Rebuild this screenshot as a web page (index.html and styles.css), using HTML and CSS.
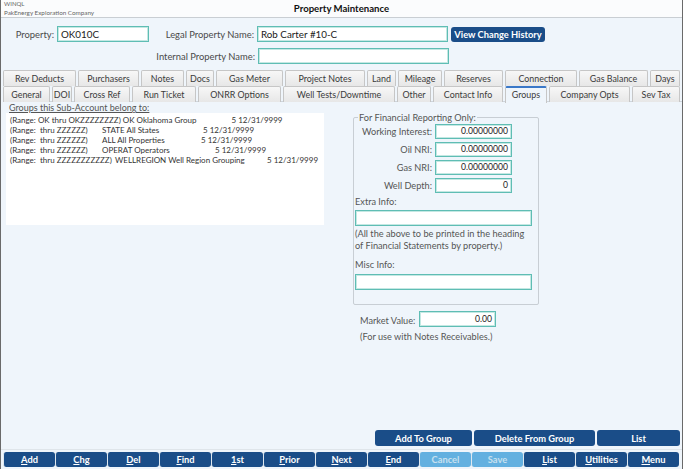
FILE: index.html
```html
<!DOCTYPE html>
<html>
<head>
<meta charset="utf-8">
<link rel="stylesheet" href="styles.css">
</head>
<body>
<div class="window">
  <div class="header">
    <div class="brand">
      <div class="app">WINQL</div>
      <div class="company">PakEnergy Exploration Company</div>
    </div>
    <div class="title">Property Maintenance</div>
  </div>

  <div class="form">
    <div class="row">
      <label class="lbl lbl-prop">Property:</label>
      <div class="input in-prop">OK010C</div>
      <label class="lbl lbl-legal">Legal Property Name:</label>
      <div class="input in-legal">Rob Carter #10-C</div>
      <button class="btn btn-history">View Change History</button>
    </div>
    <div class="row row2">
      <label class="lbl lbl-legal">Internal Property Name:</label>
      <div class="input in-legal"></div>
    </div>
  </div>

  <div class="tabs">
    <div class="tabrow back">
      <div class="tab">Rev Deducts</div>
      <div class="tab">Purchasers</div>
      <div class="tab">Notes</div>
      <div class="tab">Docs</div>
      <div class="tab">Gas Meter</div>
      <div class="tab">Project Notes</div>
      <div class="tab">Land</div>
      <div class="tab">Mileage</div>
      <div class="tab">Reserves</div>
      <div class="tab">Connection</div>
      <div class="tab">Gas Balance</div>
      <div class="tab">Days</div>
    </div>
    <div class="tabrow front">
      <div class="tab">General</div>
      <div class="tab">DOI</div>
      <div class="tab">Cross Ref</div>
      <div class="tab">Run Ticket</div>
      <div class="tab">ONRR Options</div>
      <div class="tab">Well Tests/Downtime</div>
      <div class="tab">Other</div>
      <div class="tab">Contact Info</div>
      <div class="tab active">Groups</div>
      <div class="tab">Company Opts</div>
      <div class="tab">Sev Tax</div>
    </div>
  </div>

  <div class="content">
    <div class="groups">
      <div class="groups-title">Groups this Sub-Account belong to:</div>
      <div class="listbox">
        <div class="li"><span class="c1">(Range: OK thru OKZZZZZZZZ) OK Oklahoma Group</span><span class="c2 g1">5 12/31/9999</span></div>
        <div class="li"><span class="c1 r">(Range:&nbsp; thru ZZZZZZ)</span><span class="c3 w2">STATE All States</span><span class="c2">5 12/31/9999</span></div>
        <div class="li"><span class="c1 r">(Range:&nbsp; thru ZZZZZZ)</span><span class="c3 w3">ALL All Properties</span><span class="c2">5 12/31/9999</span></div>
        <div class="li"><span class="c1 r">(Range:&nbsp; thru ZZZZZZ)</span><span class="c3 w4">OPERAT Operators</span><span class="c2">5 12/31/9999</span></div>
        <div class="li"><span class="c1 r5">(Range:&nbsp; thru ZZZZZZZZZZZ)</span><span class="c3 w5">WELLREGION Well Region Grouping</span><span class="c2">5 12/31/9999</span></div>
      </div>
    </div>

    <div class="right">
      <div class="fin">
        <div class="legend">For Financial Reporting Only:</div>
        <div class="frow first"><span class="flbl">Working Interest:</span><div class="input num">0.00000000</div></div>
        <div class="frow"><span class="flbl">Oil NRI:</span><div class="input num">0.00000000</div></div>
        <div class="frow"><span class="flbl">Gas NRI:</span><div class="input num">0.00000000</div></div>
        <div class="frow"><span class="flbl">Well Depth:</span><div class="input num">0</div></div>
        <div class="slbl">Extra Info:</div>
        <div class="input wide"></div>
        <div class="note">(All the above to be printed in the heading<br>of Financial Statements by property.)</div>
        <div class="slbl misc">Misc Info:</div>
        <div class="input wide"></div>
      </div>
      <div class="market">
        <span class="mlbl">Market Value:</span><div class="input num">0.00</div>
      </div>
      <div class="mnote">(For use with Notes Receivables.)</div>
    </div>
  </div>

  <div class="actions">
    <button class="btn a1">Add To Group</button>
    <button class="btn a2">Delete From Group</button>
    <button class="btn a3">List</button>
  </div>
  <div class="toolbar">
    <button class="btn tb"><u>A</u>dd</button>
    <button class="btn tb"><u>C</u>hg</button>
    <button class="btn tb"><u>D</u>el</button>
    <button class="btn tb"><u>F</u>ind</button>
    <button class="btn tb"><u>1</u>st</button>
    <button class="btn tb"><u>P</u>rior</button>
    <button class="btn tb"><u>N</u>ext</button>
    <button class="btn tb"><u>E</u>nd</button>
    <button class="btn tb off">Cancel</button>
    <button class="btn tb off">Save</button>
    <button class="btn tb"><u>L</u>ist</button>
    <button class="btn tb"><u>U</u>tilities</button>
    <button class="btn tb"><u>M</u>enu</button>
  </div>
</div>
</body>
</html>
```

FILE: styles.css
```css
* { box-sizing: border-box; }
html, body { margin: 0; padding: 0; }
body {
  font-family: "Segoe UI", Lato, "Noto Sans", sans-serif;
  font-size: 9.3px;
  color: #4a4a4a;
  background: #fff;
  white-space: nowrap;
}
.window {
  width: 683px;
  height: 469px;
  background: #eff5fb;
  border-left: 1px solid #6a6a6a;
  border-right: 1px solid #6a6a6a;
  display: flex;
  flex-direction: column;
  overflow: hidden;
}
.header {
  height: 18px;
  background: #fbfcfd;
  border-bottom: 1px solid #c9ced3;
  display: flex;
  position: relative;
}
.brand { padding-left: 3px; line-height: 7px; color: #666; }
.app { font-size: 6px; }
.company { font-size: 6.3px; margin-top: 2px; }
.title {
  position: absolute;
  left: 0; right: 0; top: 3px;
  text-align: center;
  font-weight: bold;
  font-size: 9.6px;
  color: #111;
  line-height: 12px;
}
.form { padding-top: 8px; }
.row { display: flex; align-items: center; height: 16px; }
.row2 { margin-top: 6px; padding-left: 149px; }
.lbl { text-align: right; padding-right: 3px; color: #4a4a4a; font-size: 9.4px; }
.lbl-prop { width: 56px; }
.lbl-legal { width: 108px; }
.input {
  height: 16px;
  background: #fff;
  border: 1px solid #5fbdb4;
  box-shadow: inset 0 0 0 1px #c4e8e3;
  padding: 0 3px;
  line-height: 14px;
  color: #1a1a1a;
  font-size: 9.8px;
}
.in-prop { width: 92px; }
.in-legal { width: 191px; }
.btn {
  font-family: inherit;
  background: #1a4d88;
  color: #fff;
  border: none;
  border-radius: 3px;
  font-weight: bold;
  font-size: 9.3px;
  padding: 0;
  height: 16px;
  white-space: nowrap;
}
.btn-history { margin-left: 3px; width: 94px; height: 15px; }

.tabs { margin-top: 6px; padding-left: 2px; }
.tabrow { display: flex; gap: 2px; height: 16px; }
.tab {
  height: 16px;
  background: linear-gradient(#f7f7f7, #e7e7e7);
  border: 1px solid #c6c6c6;
  border-bottom: none;
  border-radius: 2px 2px 0 0;
  text-align: center;
  line-height: 15px;
  color: #3a3a3a;
  font-size: 8.9px;
  overflow: hidden;
}
.back .tab:nth-child(1) { width: 73px; }
.back .tab:nth-child(2) { width: 61px; }
.back .tab:nth-child(3) { width: 43px; }
.back .tab:nth-child(4) { width: 28px; }
.back .tab:nth-child(5) { width: 67px; }
.back .tab:nth-child(6) { width: 80px; }
.back .tab:nth-child(7) { width: 29px; }
.back .tab:nth-child(8) { width: 44px; }
.back .tab:nth-child(9) { width: 59px; }
.back .tab:nth-child(10) { width: 72px; }
.back .tab:nth-child(11) { width: 69px; }
.back .tab:nth-child(12) { width: 30px; }
.front { border-bottom: 1px solid #cfd6dd; }
.front .tab:nth-child(1) { width: 47px; }
.front .tab:nth-child(2) { width: 20px; }
.front .tab:nth-child(3) { width: 56px; }
.front .tab:nth-child(4) { width: 64px; }
.front .tab:nth-child(5) { width: 83px; }
.front .tab:nth-child(6) { width: 112px; }
.front .tab:nth-child(7) { width: 34px; }
.front .tab:nth-child(8) { width: 70px; }
.front .tab:nth-child(9) { width: 42px; }
.front .tab:nth-child(10) { width: 81px; }
.front .tab:nth-child(11) { width: 48px; }
.tab.active {
  background: #eff5fb;
  border-top: 2px solid #3a78c8;
  line-height: 14px;
  height: 17px;
}

.content { display: flex; flex: 1; }
.groups { width: 352px; padding-left: 5px; }
.groups-title { text-decoration: underline; color: #555; padding-left: 3px; font-size: 9px; line-height: 11px; }
.listbox {
  width: 318px;
  height: 112px;
  background: #fff;
  padding: 2px 0 0 4px;
  font-size: 8px;
  color: #333;
}
.li { display: flex; height: 10px; line-height: 10px; }
.c1.r { width: 92px; }
.c1.r5 { width: 105px; }
.g1 { margin-left: 35px; }
.w2 { width: 101px; }
.w3 { width: 99px; }
.w4 { width: 113px; }
.w5 { width: 152px; }

.right { width: 190px; padding-top: 15px; }
.fin {
  width: 186px;
  height: 188px;
  border: 1px solid #c8ced4;
  border-radius: 2px;
  padding: 0 0 0 1px;
}
.legend {
  margin-top: -6px;
  margin-left: 3px;
  background: #eff5fb;
  padding: 0 1px;
  width: max-content;
  color: #555;
  line-height: 11px;
  height: 11px;
  font-size: 9.2px;
}
.frow { display: flex; align-items: center; margin-bottom: 3px; height: 15px; }
.frow.first { margin-top: 1px; }
.flbl { width: 80px; text-align: right; padding-right: 3px; color: #555; font-size: 9.2px; }
.num { width: 77px; height: 15px; text-align: right; font-size: 8.6px; line-height: 13px; }
.slbl { color: #555; margin-top: 3px; margin-bottom: 2px; line-height: 12px; font-size: 9.2px; }
.misc { margin-top: 7px; margin-bottom: 3px; }
.wide { width: 177px; height: 16px; }
.note { color: #555; line-height: 12px; margin-top: 2px; font-size: 9.2px; }
.market { display: flex; align-items: center; margin-top: 6px; padding-left: 7px; }
.market .num { height: 16px; line-height: 14px; }
.mlbl { width: 59px; color: #555; font-size: 9.2px; padding-top: 3px; }
.mnote { color: #555; margin-top: 4px; padding-left: 7px; font-size: 9.2px; line-height: 12px; }

.actions {
  display: flex;
  justify-content: flex-end;
  gap: 2px;
  padding-right: 2px;
  height: 16px;
}
.a1 { width: 97px; }
.a2 { width: 121px; }
.a3 { width: 83px; }
.toolbar {
  display: flex;
  margin-top: 3px;
  border-top: 1px solid #dfe5ea;
  padding: 2px 0 2px 2px;
}
.tb { width: 52px; border-radius: 3px; height: 15px; border-left: 1px solid #dfe8f0; }
.off { background: #63b0e0; color: #c8e0ef; }
```
